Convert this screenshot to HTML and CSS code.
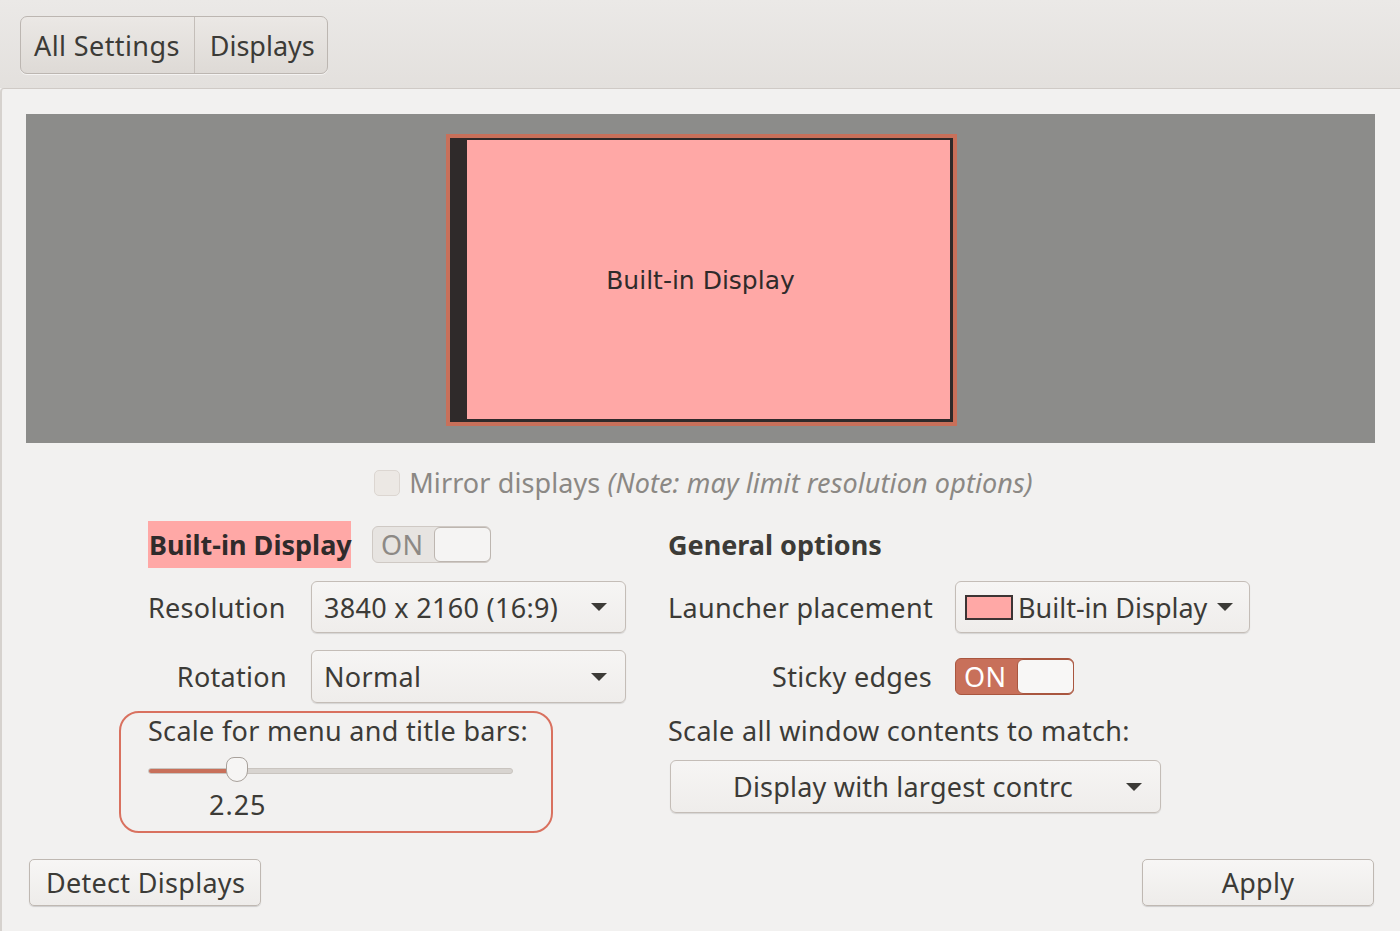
FILE: index.html
```html
<!DOCTYPE html>
<html>
<head>
<meta charset="utf-8">
<link rel="stylesheet" href="styles.css">
</head>
<body>
<div class="window">
  <div class="header">
    <div class="crumbs">
      <div class="crumb">All Settings</div>
      <div class="crumb">Displays</div>
    </div>
  </div>
  <div class="panel">
    <div class="preview">
      <div class="monitor">
        <div class="screen">
          <div class="launcher"></div>
          <div class="screen-label">Built-in Display</div>
        </div>
      </div>
    </div>
    <div class="mirror">
      <span class="checkbox"></span>
      <span class="mirror-text">Mirror displays <i>(Note: may limit resolution options)</i></span>
    </div>
    <div class="settings">
      <div class="col-left">
        <div class="row row-head">
          <span class="display-name">Built-in Display</span>
          <span class="switch switch-off"><span class="sw-text">ON</span><span class="knob"></span></span>
        </div>
        <div class="row row-combo">
          <span class="label">Resolution</span>
          <div class="combo combo-left"><span class="combo-text">3840 x 2160 (16:9)</span><span class="arrow"></span></div>
        </div>
        <div class="row row-combo2">
          <span class="label label-right">Rotation</span>
          <div class="combo combo-left"><span class="combo-text">Normal</span><span class="arrow"></span></div>
        </div>
        <div class="scale-box">
          <div class="scale-title">Scale for menu and title bars:</div>
          <div class="slider">
            <div class="track"><div class="fill" style="width:89px"></div></div>
            <div class="thumb" style="left:78px"></div>
          </div>
          <div class="scale-value">2.25</div>
        </div>
      </div>
      <div class="col-right">
        <div class="row row-head">
          <span class="section-title">General options</span>
        </div>
        <div class="row row-combo">
          <span class="label rlabel">Launcher placement</span>
          <div class="combo combo-launch"><span class="swatch"></span><span class="combo-text">Built-in Display</span><span class="arrow"></span></div>
        </div>
        <div class="row row-combo2">
          <span class="label rlabel label-right">Sticky edges</span>
          <span class="switch switch-on"><span class="sw-text">ON</span><span class="knob"></span></span>
        </div>
        <div class="row row-scale-all">
          <span class="label">Scale all window contents to match:</span>
        </div>
        <div class="combo combo-wide"><span class="combo-text">Display with largest contrc</span><span class="arrow"></span></div>
      </div>
    </div>
    <div class="bottom">
      <div class="button btn-detect">Detect Displays</div>
      <div class="button btn-apply">Apply</div>
    </div>
  </div>
</div>
</body>
</html>
```
FILE: styles.css
```css
* { box-sizing: border-box; }
html, body {
  margin: 0;
  padding: 0;
  width: 1400px;
  height: 931px;
  overflow: hidden;
  background: #f2f1f0;
  font-family: "Noto Sans", "DejaVu Sans", sans-serif;
  font-size: 27px;
  letter-spacing: 0.3px;
  color: #3c3b37;
}
.window {
  width: 1400px;
  height: 931px;
  display: flex;
  flex-direction: column;
}
.header {
  height: 88px;
  flex: none;
  background: linear-gradient(#ebe9e7, #e3e0dd);
  padding: 16px 0 0 20px;
}
.crumbs {
  display: inline-flex;
  height: 58px;
  border: 1px solid #bcb6b1;
  border-radius: 7px;
  background: linear-gradient(#ebe8e5, #dedad6);
  box-shadow: 0 1px 0 rgba(255,255,255,0.6);
}
.crumb {
  display: flex;
  align-items: center;
  padding: 0 14px 0 13px;
  font-size: 27px;
  letter-spacing: 0.4px;
  color: #3c3b37;
}
.crumb + .crumb {
  border-left: 1px solid #c4beb9;
  padding: 0 12px 0 15px;
  letter-spacing: 0;
}
.panel {
  flex: 1;
  background: #f2f1f0;
  border-top: 1px solid #cfcac6;
  border-left: 2px solid #d6d2ce;
  border-top-left-radius: 4px;
  padding: 25px 24px 0 24px;
  display: flex;
  flex-direction: column;
}
.preview {
  height: 329px;
  width: 1349px;
  background: #8c8c8a;
  display: flex;
  justify-content: center;
  padding-top: 20px;
  padding-left: 2px;
}
.monitor {
  width: 511px;
  height: 292px;
  border: 4px solid #c8705a;
  background: #2f2a2a;
  padding: 2px 3px 3px 1px;
}
.screen {
  width: 100%;
  height: 100%;
  display: flex;
}
.launcher {
  width: 16px;
  flex: none;
  background: #2f2a2a;
}
.screen-label {
  flex: 1;
  background: #ffa8a6;
  display: flex;
  align-items: center;
  justify-content: center;
  font-family: "DejaVu Sans", sans-serif;
  font-size: 25px;
  letter-spacing: 0;
  color: #2f2b2b;
  padding-right: 16px;
  padding-top: 2px;
}
.mirror {
  margin-top: 26px;
  height: 27px;
  display: flex;
  align-items: center;
  justify-content: center;
  gap: 9px;
  padding-left: 5px;
}
.checkbox {
  width: 26px;
  height: 26px;
  border: 1px solid #dcd6d1;
  border-radius: 5px;
  background: #ece8e4;
}
.mirror-text {
  color: #8b8884;
  letter-spacing: 0.1px;
}
.mirror-text i { font-style: italic; }
.settings {
  margin-top: 25px;
  display: flex;
  height: 312px;
}
.col-left {
  width: 642px;
  flex: none;
  padding-left: 93px;
  display: flex;
  flex-direction: column;
}
.col-right {
  display: flex;
  flex-direction: column;
  width: 620px;
}
.row {
  display: flex;
  align-items: center;
}
.row-head {
  height: 47px;
  padding-left: 29px;
}
.col-right .row { padding-left: 0; }
.display-name {
  background: #ffa8a6;
  font-weight: bold;
  letter-spacing: 0;
  height: 47px;
  width: 203px;
  display: flex;
  align-items: center;
  padding-left: 1px;
  color: #2f2b2b;
  margin-right: 21px;
  white-space: nowrap;
}
.switch {
  width: 119px;
  height: 37px;
  border-radius: 6px;
  display: flex;
  align-items: center;
}
.switch-off {
  border: 1px solid #cfc9c4;
  background: #e7e4e1;
  color: #8d8985;
}
.switch-on {
  border: 1px solid #a9563f;
  background: #c8705a;
  color: #ffffff;
}
.sw-text {
  padding-left: 8px;
  width: 61px;
}
.knob {
  flex: 1;
  height: 35px;
  border-radius: 6px;
  border: 1px solid #bdb6b0;
  background: #f5f4f3;
  margin-right: -1px;
}
.switch-on .knob { border-color: #a9563f; background: #f8f7f6; }
.label {
  color: #3c3b37;
  white-space: nowrap;
}
.col-left .label { width: 139px; margin-left: 29px; margin-right: 24px; }
.label-right { text-align: right; }
.row-combo { margin-top: 13px; height: 52px; }
.row-combo2 { margin-top: 17px; height: 53px; }
.combo {
  height: 52px;
  border: 1px solid #c4bdb7;
  border-radius: 6px;
  background: linear-gradient(#f6f5f4, #efedeb);
  box-shadow: 0 1px 1px rgba(0,0,0,0.12);
  display: flex;
  align-items: center;
  color: #3c3b37;
  flex: none;
}
.row-combo2 .combo { height: 53px; }
.combo-left { width: 315px; padding-left: 12px; }
.combo-text { flex: 1; white-space: nowrap; }
.arrow {
  width: 0;
  height: 0;
  border-left: 8px solid transparent;
  border-right: 8px solid transparent;
  border-top: 8px solid #3c3b37;
  margin-right: 18px;
  flex: none;
}
.scale-box {
  margin-top: 8px;
  width: 434px;
  height: 122px;
  border: 2px solid #d9715f;
  border-radius: 20px;
  padding: 0 0 0 27px;
}
.scale-title { height: 36px; line-height: 36px; }
.slider {
  position: relative;
  height: 28px;
  margin-top: 8px;
  width: 365px;
}
.track {
  position: absolute;
  left: 0;
  right: 0;
  top: 11px;
  height: 6px;
  border-radius: 3px;
  background: #d8d4d0;
  border: 1px solid #c9c4bf;
}
.fill {
  height: 100%;
  background: #c8705a;
  border-radius: 3px;
}
.thumb {
  position: absolute;
  top: 0;
  width: 22px;
  height: 25px;
  background: #f6f5f4;
  border: 1px solid #a8a19b;
  border-radius: 8px 8px 11px 11px;
}
.scale-value { margin-left: 61px; line-height: 36px; letter-spacing: 1px; margin-top: 2px; }
.section-title { font-weight: bold; letter-spacing: 0; color: #3c3b37; }
.rlabel { width: 264px; margin-right: 23px; }
.combo-launch { width: 295px; padding-left: 9px; }
.combo-launch .combo-text { letter-spacing: 0; }
.combo-launch .arrow { margin-right: 16px; }
.swatch {
  width: 48px;
  height: 25px;
  background: #ffa8a6;
  border: 2px solid #3c3434;
  margin-right: 5px;
  flex: none;
}
.row-scale-all { margin-top: 1px; height: 53px; }
.combo-wide {
  margin-top: 3px;
  margin-left: 2px;
  width: 491px;
  height: 53px;
  padding-left: 62px;
}
.combo-wide .combo-text { flex: none; letter-spacing: 0.2px; }
.combo-wide .arrow { margin-left: auto; margin-right: 18px; }
.bottom {
  margin-top: 26px;
  display: flex;
  justify-content: space-between;
  padding-left: 3px;
  padding-right: 2px;
}
.button {
  width: 232px;
  height: 47px;
  border: 1px solid #bfb8b2;
  border-radius: 5px;
  background: linear-gradient(#f7f6f5, #eeecea);
  box-shadow: 0 1px 1px rgba(0,0,0,0.15);
  display: flex;
  align-items: center;
  color: #3c3b37;
}
.btn-detect { padding-left: 16px; }
.btn-apply { justify-content: center; }
```
